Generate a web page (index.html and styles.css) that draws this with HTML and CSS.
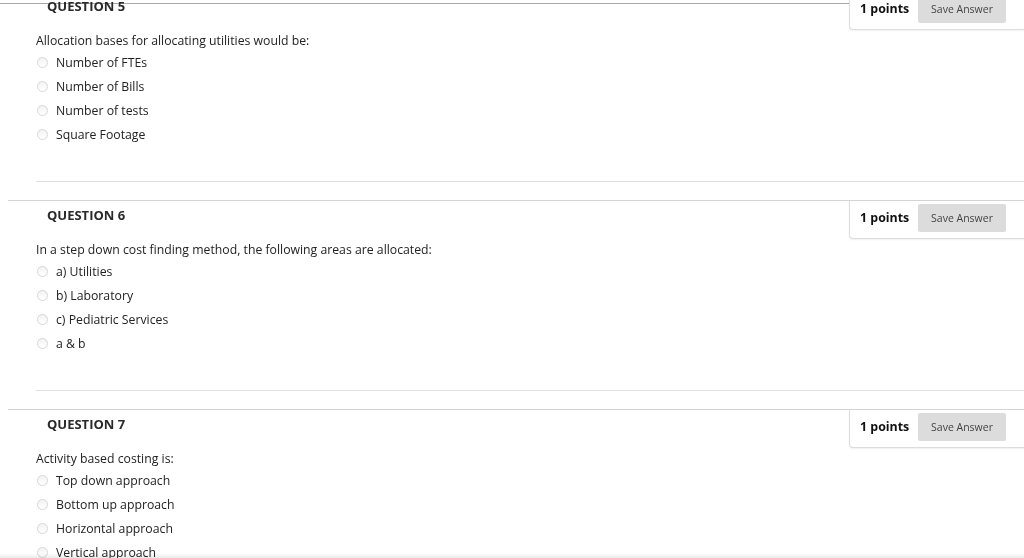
FILE: index.html
```html
<!DOCTYPE html>
<html>
<head>
<meta charset="utf-8">
<link rel="stylesheet" href="styles.css">
</head>
<body>
<div class="topline"></div>
<div class="questions">
  <div class="question">
    <div class="q-head">
      <h3 class="q-title">QUESTION 5</h3>
      <div class="points-box">
        <span class="points">1 points</span>
        <button class="save">Save Answer</button>
      </div>
    </div>
    <div class="q-body">
      <p class="q-text">Allocation bases for allocating utilities would be:</p>
      <ul class="options">
        <li><span class="radio"></span>Number of FTEs</li>
        <li><span class="radio"></span>Number of Bills</li>
        <li><span class="radio"></span>Number of tests</li>
        <li><span class="radio"></span>Square Footage</li>
      </ul>
      <div class="sep"></div>
    </div>
  </div>
  <div class="question">
    <div class="q-head">
      <h3 class="q-title">QUESTION 6</h3>
      <div class="points-box">
        <span class="points">1 points</span>
        <button class="save">Save Answer</button>
      </div>
    </div>
    <div class="q-body">
      <p class="q-text">In a step down cost finding method, the following areas are allocated:</p>
      <ul class="options">
        <li><span class="radio"></span>a) Utilities</li>
        <li><span class="radio"></span>b) Laboratory</li>
        <li><span class="radio"></span>c) Pediatric Services</li>
        <li><span class="radio"></span>a &amp; b</li>
      </ul>
      <div class="sep"></div>
    </div>
  </div>
  <div class="question">
    <div class="q-head">
      <h3 class="q-title">QUESTION 7</h3>
      <div class="points-box">
        <span class="points">1 points</span>
        <button class="save">Save Answer</button>
      </div>
    </div>
    <div class="q-body">
      <p class="q-text">Activity based costing is:</p>
      <ul class="options">
        <li><span class="radio"></span>Top down approach</li>
        <li><span class="radio"></span>Bottom up approach</li>
        <li><span class="radio"></span>Horizontal approach</li>
        <li><span class="radio"></span>Vertical approach</li>
      </ul>
      <div class="sep"></div>
    </div>
  </div>
</div>
<div class="bottom-shade"></div>
</body>
</html>
```
FILE: styles.css
```css
html, body {
  margin: 0;
  padding: 0;
  background: #fff;
  overflow: hidden;
}
body {
  font-family: "Open Sans", "Liberation Sans", sans-serif;
  color: #222;
  height: 558px;
}
.topline {
  position: fixed;
  top: 3px;
  left: 0;
  right: 0;
  height: 1px;
  background: #a8a8a8;
  z-index: 0;
}
.questions {
  margin-top: -9px;
  position: relative;
  z-index: 1;
}
.question {
  margin-left: 8px;
  border-top: 1px solid #d4d4d4;
}
.q-head {
  display: flex;
  justify-content: space-between;
  align-items: flex-start;
  height: 38px;
}
.q-title {
  margin: 0;
  padding-left: 39px;
  font-size: 13px;
  font-weight: 700;
  line-height: 28px;
  color: #2a2a2a;
}
.points-box {
  display: flex;
  align-items: flex-start;
  width: 175px;
  height: 38px;
  box-sizing: border-box;
  border-left: 1px solid #ddd;
  border-bottom: 1px solid #ddd;
  border-bottom-left-radius: 4px;
  box-shadow: 0 1px 2px rgba(0,0,0,0.06);
  padding-left: 10px;
  padding-top: 3px;
  background: #fff;
}
.points {
  font-size: 12.4px;
  font-weight: 700;
  color: #111;
  width: 58px;
  line-height: 28px;
}
.save {
  font-family: "Open Sans", "Liberation Sans", sans-serif;
  font-size: 10.5px;
  color: #444;
  background: #dcdcdc;
  border: none;
  border-radius: 2px;
  width: 88px;
  height: 28px;
  padding: 0;
  margin: 0;
}
.q-body {
  padding-left: 28px;
}
.q-text {
  margin: 0;
  padding-top: 1px;
  font-size: 12.25px;
  line-height: 20px;
}
.options {
  list-style: none;
  margin: 0;
  padding: 0;
}
.options li {
  display: flex;
  align-items: center;
  height: 23.75px;
  font-size: 12.25px;
}
.radio {
  display: inline-block;
  width: 11px;
  height: 11px;
  box-sizing: border-box;
  border: 1px solid #d6d6d6;
  border-radius: 50%;
  background: linear-gradient(#f3f3f3, #fff);
  margin-left: 1px;
  margin-right: 8px;
}
.sep {
  margin-top: 35px;
  margin-bottom: 18px;
  height: 1px;
  background: #e0e0e0;
}
.bottom-shade {
  position: fixed;
  left: 0;
  right: 0;
  bottom: 0;
  height: 5px;
  background: linear-gradient(rgba(0,0,0,0), rgba(0,0,0,0.08));
  z-index: 2;
}
```
